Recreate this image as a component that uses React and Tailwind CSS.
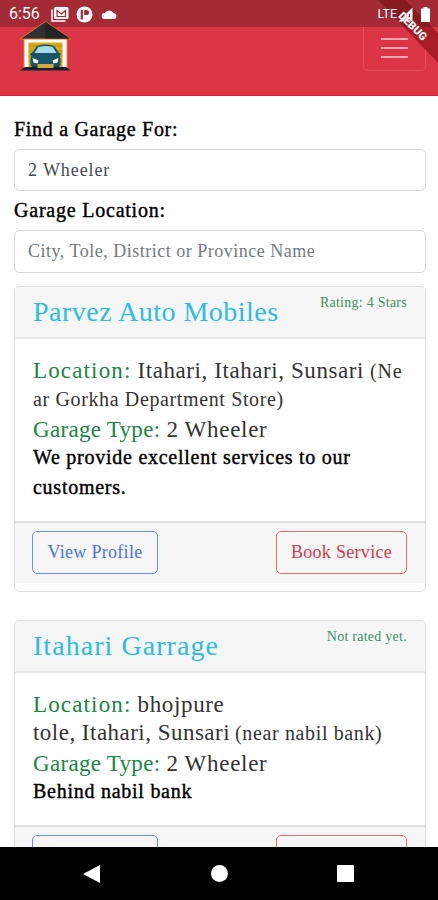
import React from "react";

const garages = [
  {
    name: "Parvez Auto Mobiles",
    nameClass: "tracking-[0.48px]",
    rating: "Rating: 4 Stars",
    location: "Itahari, Itahari, Sunsari",
    locationClass: "tracking-[0.58px]",
    near: "(Ne",
    secondLine: "",
    secondNear: "ar Gorkha Department Store)",
    about: ["We provide excellent services to our", "customers."],
  },
  {
    name: "Itahari Garrage",
    nameClass: "tracking-[1.05px]",
    rating: "Not rated yet.",
    location: "bhojpure",
    locationClass: "tracking-[0.65px]",
    near: "",
    secondLine: "tole, Itahari, Sunsari",
    secondNear: "(near nabil bank)",
    about: ["Behind nabil bank"],
  },
];

const GarageLogo = () => (
  <svg className="ml-5 mt-[21px] h-[51px] w-[52px]" viewBox="0 0 52 51">
    <path d="M4 17h43v31H4z" fill="#fff" stroke="#e8842c" strokeWidth="1" />
    <path d="M8.500 21.500h34V48h-34z" fill="#dba913" />
    <path d="M8.500 25h34M8.500 30h34M8.500 35h34M8.500 40h34" stroke="#b3860f" strokeWidth="0.800" />
    <path d="M0 18 25.500 0.500 51 18z" fill="#2f2f31" stroke="#d9742c" strokeWidth="1" />
    <path d="M25.500 1 50 17.500H25.500z" fill="#232325" />
    <path d="M0 49.500 5 46h41l5 3.500z" fill="#14232c" />
    <path d="M12 41h7v7h-7zM32 41h7v7h-7z" fill="#10242c" />
    <path
      d="M9.500 33l3-1.500L16 26Q18 23.500 25.500 23.500T35 26l3.500 5.500 3 1.500-2 1.500 1 3v7q0 1-2 1h-26q-2 0-2-1v-7l1-3z"
      fill="#165368"
    />
    <path d="M14.500 32 18 26.500Q19 25 25.500 25T33 26.500L36.500 32z" fill="#a5dbe9" />
    <path d="M12.500 37l6 2.500-1 3-4-1zM38.500 37l-6 2.500 1 3 4-1z" fill="#fff" />
    <path d="M17.500 43h16v4h-16z" fill="#d0a83f" />
  </svg>
);

const StatusBar = () => (
  <div className="absolute inset-x-0 top-0 flex h-[27px] items-center pl-[9px] pt-[1px] text-white">
    <span className="w-[42px] font-['Roboto',sans-serif] text-[16px] leading-none">6:56</span>
    <svg className="h-[15px] w-[18px]" viewBox="0 0 18 15">
      <path d="M1 2.500V14h13.500" fill="none" stroke="#fff" strokeWidth="1.500" />
      <rect x="3" y="0" width="14.500" height="12" rx="1.500" fill="#fff" />
      <path d="M6 9.500V3.500l4.300 3.500L14.500 3.500v6z" fill="none" stroke="#a42a36" strokeWidth="1.200" />
    </svg>
    <svg className="ml-[7px] h-[17px] w-[17px]" viewBox="0 0 17 17">
      <circle cx="8.500" cy="8.500" r="8" fill="#fff" />
      <path d="M5.800 4v9.500" stroke="#a42a36" strokeWidth="2.200" />
      <path d="M8.200 9V4h2.300a2.500 2.500 0 0 1 0 5z" fill="#a42a36" />
    </svg>
    <svg className="ml-[8px] h-[11px] w-[17px]" viewBox="0 0 17 11">
      <path d="M3.500 10a3 3 0 0 1 .3-6A5 5 0 0 1 12.500 4a3.100 3.100 0 0 1 1 6z" fill="#fff" />
    </svg>
    <span className="ml-auto font-['Roboto',sans-serif] text-[12.500px] leading-none">LTE</span>
    <svg className="ml-[1px] h-[15px] w-[15px]" viewBox="0 0 15 15">
      <path d="M14.500 0.500v14H0.500z" fill="#fff" />
      <path d="M11.500 7v6" stroke="#8a1a22" strokeWidth="1" />
    </svg>
    <svg className="ml-[8px] mr-[8px] h-[15px] w-[9px]" viewBox="0 0 9 15">
      <path d="M2.500 0h4v1.500H9V15H0V1.500h2.500z" fill="#fff" />
    </svg>
  </div>
);

const DebugBanner = () => (
  <svg className="absolute right-0 top-0 h-[70px] w-[70px]" viewBox="0 0 70 70">
    <path d="M10 0h27l33 33v30z" fill="#a81c26" />
    <path d="M10 0h27l27 27H37z" fill="#881a22" />
  </svg>
);

const DebugLabel = () => (
  <svg className="absolute right-0 top-0 h-[70px] w-[70px]" viewBox="0 0 70 70">
    <text
      x="45"
      y="30"
      transform="rotate(45 45 26)"
      textAnchor="middle"
      fill="#fff"
      stroke="#8a1a22"
      strokeWidth="0.500"
      paintOrder="stroke"
      className="font-['Roboto',sans-serif] text-[11px] font-black"
    >
      DEBUG
    </text>
  </svg>
);

const Header = () => (
  <header className="relative flex h-[96px] shrink-0 items-start justify-between border-b border-[#d02a3b] bg-[#dc3545]">
    <div className="absolute inset-x-0 top-0 h-[27px] bg-[#a42a36]" />
    <div className="relative">
      <GarageLogo />
    </div>
    <button className="mr-[12px] mt-[27px] flex h-[44px] w-[63px] flex-col items-center justify-center gap-[7px] rounded-b-[5px] border border-t-0 border-[#e34f5d] pb-[1px]">
      <span className="h-[2px] w-[27px] bg-[#f3a9b0]" />
      <span className="h-[2px] w-[27px] bg-[#f3a9b0]" />
      <span className="h-[2px] w-[27px] bg-[#f3a9b0]" />
    </button>
    <DebugBanner />
    <StatusBar />
    <DebugLabel />
  </header>
);

const GarageCard = ({ garage }) => (
  <article className="mb-[28px] h-[306px] shrink-0 overflow-hidden rounded-[5px] border-[1.500px] border-[#dfe0e1] bg-white whitespace-nowrap">
    <div className="flex h-[52px] justify-between border-b-2 border-[#e8e9ea] bg-[#f6f6f6] pl-[18px] pr-[18px]">
      <h2 className={`text-[28px] leading-[50px] text-[#2bbde8] ${garage.nameClass}`}>
        {garage.name}
      </h2>
      <span className="text-[14px] leading-[32px] tracking-[0.26px] text-[#3d8f66]">
        {garage.rating}
      </span>
    </div>
    <div className="pl-[18px] pt-[18px] pb-[18px] text-[23px] text-[#333]">
      <div className="h-[28px] leading-[28px]">
        <span className="mr-[6px] tracking-[1.15px] text-[#1b8446]">Location:</span>
        <span className={garage.locationClass}>{garage.location}</span>
        <span className="ml-[6px] text-[20px] tracking-[0.8px]">{garage.near}</span>
      </div>
      <div className="h-[27px] leading-[27px]">
        {garage.secondLine && (
          <span className="mr-[5px] tracking-[0.48px]">{garage.secondLine}</span>
        )}
        <span className="text-[20px] tracking-[0.63px]">{garage.secondNear}</span>
      </div>
      <div className="mt-[5px] h-[26px] leading-[26px]">
        <span className="mr-[6px] tracking-[0.3px] text-[#1b8446]">Garage Type:</span>
        <span className="tracking-[0.7px]">2 Wheeler</span>
      </div>
      {garage.about.map((line) => (
        <p
          key={line}
          className="h-[30px] text-[20px] leading-[29px] tracking-[0.74px] text-black [-webkit-text-stroke:0.4px_black]"
        >
          {line}
        </p>
      ))}
    </div>
    <div className="flex h-[62px] items-start justify-between border-t-2 border-[#dfe0e1] bg-[#f6f6f6] pl-[17px] pr-[18px] pt-[8px] text-[18px]">
      <button className="h-[43px] w-[126px] rounded-[5px] border-[1.500px] border-[#6d8ff5] tracking-[0.3px] text-[#4a72ee]">
        View Profile
      </button>
      <button className="h-[43px] w-[131px] rounded-[5px] border-[1.500px] border-[#e0707a] tracking-[0.3px] text-[#d63a4c]">
        Book Service
      </button>
    </div>
  </article>
);

const NavBar = () => (
  <nav className="flex h-[53px] shrink-0 items-center bg-black pl-[83px]">
    <svg className="h-[18px] w-[17px]" viewBox="0 0 17 18">
      <path d="M17 0v18L0 9z" fill="#fff" />
    </svg>
    <span className="ml-[111px] h-[17px] w-[17px] rounded-full bg-white" />
    <span className="ml-[109px] h-[17px] w-[17px] rounded-[1px] bg-white" />
  </nav>
);

export default function App() {
  return (
    <div className="flex h-[900px] w-[438px] flex-col overflow-hidden bg-white font-['Liberation_Serif',serif]">
      <Header />
      <main className="flex min-h-0 flex-1 flex-col overflow-hidden pl-[14px] pr-[12px]">
        <label className="mt-[18px] h-[30px] shrink-0 text-[20px] leading-[30px] tracking-[0.7px] text-black [-webkit-text-stroke:0.4px_black]">
          Find a Garage For:
        </label>
        <div className="mt-[5px] h-[42px] shrink-0 rounded-[5px] border-[1.500px] border-[#d6d9dc] pl-[13px] text-[18px] leading-[41px] tracking-[0.9px] text-[#444b52]">
          2 Wheeler
        </div>
        <label className="mt-[4px] h-[30px] shrink-0 text-[20px] leading-[30px] tracking-[0.78px] text-black [-webkit-text-stroke:0.4px_black]">
          Garage Location:
        </label>
        <div className="mt-[5px] mb-[13px] h-[43px] shrink-0 rounded-[5px] border-[1.500px] border-[#d6d9dc] pl-[13px] text-[18px] leading-[41px] tracking-[0.5px] text-[#737a81]">
          City, Tole, District or Province Name
        </div>
        {garages.map((garage) => (
          <GarageCard key={garage.name} garage={garage} />
        ))}
      </main>
      <NavBar />
    </div>
  );
}
